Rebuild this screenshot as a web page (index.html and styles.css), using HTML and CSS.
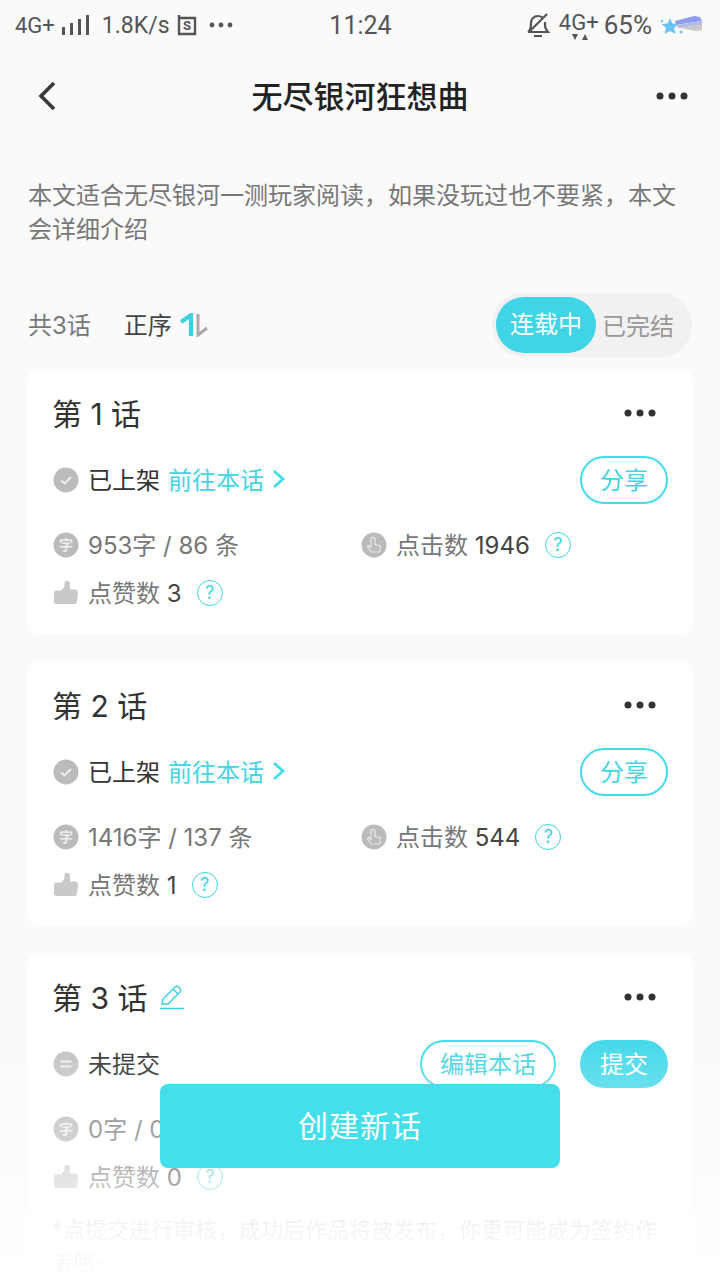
FILE: index.html
```html
<!DOCTYPE html>
<html lang="zh-CN">
<head>
    <meta charset="UTF-8">
    <meta name="viewport" content="width=device-width, initial-scale=1.0">
    <title>无尽银河狂想曲</title>
    <link rel="stylesheet" href="styles.css">
</head>
<body>
    <div class="page">
        <div class="status-bar">
            <div class="status-left">
                <span>4G+</span>
                <svg class="signal" width="28" height="20" viewBox="0 0 28 20"><path d="M0 12h3v8H0zM8 8h3v12H8zM16 4h3v16h-3zM24 0h3v20h-3z" fill="#555"/></svg>
                <span class="speed">1.8K/s</span>
                <svg width="20" height="22" viewBox="0 0 20 22"><path d="M2 1v19h16V4H2" fill="none" stroke="#555" stroke-width="2.4"/><text x="10" y="16" class="s-letter">S</text></svg>
                <svg class="status-dots" width="24" height="6" viewBox="0 0 24 6"><circle cx="3" cy="3" r="2.4" fill="#555"/><circle cx="12" cy="3" r="2.4" fill="#555"/><circle cx="21" cy="3" r="2.4" fill="#555"/></svg>
            </div>
            <div class="status-time">11:24</div>
            <div class="status-right">
                <svg width="24" height="26" viewBox="0 0 24 26"><path d="M2 20c3-2 3-5 3-9 0-4 3-7 7-7 2 0 3 .6 4.500 1.500M19 10v3c0 3 1 5 3 7H2M8 24h8M3 20L21 2" fill="none" stroke="#555" stroke-width="2.200"/></svg>
                <span class="net-type">4G+<svg class="net-arrows" width="16" height="8" viewBox="0 0 16 8"><path d="M0 1h6L3 7zM10 7h6l-3-6z" fill="#555"/></svg></span>
                <span class="battery">65%</span>
                <svg width="42" height="20" viewBox="0 0 42 20"><path d="M15 6L34 1l6 1 2 4-26 4z" fill="#8f9df0"/><path d="M17 10l25-4 0 4-24 3z" fill="#b5b8e0"/><path d="M19 13l23-3 0 5-6 1z" fill="#c9c9c9"/><path d="M10 3l2.500 5.500 6 .5-4.500 4 1.500 6-5.500-3-5.500 3 1.500-6-4.500-4 6-.5z" fill="#6cc3f0"/><circle cx="2" cy="6" r="1.200" fill="#6cc3f0"/><circle cx="21" cy="17" r="1.500" fill="#6cc3f0"/></svg>
            </div>
        </div>

        <header class="nav-bar">
            <svg width="18" height="30" viewBox="0 0 18 30"><path d="M16 2L3 15l13 13" fill="none" stroke="#3a3a3a" stroke-width="3.600"/></svg>
            <h1>无尽银河狂想曲</h1>
            <svg class="dots" width="32" height="8" viewBox="0 0 32 8"><circle cx="4" cy="4" r="3.500"/><circle cx="16" cy="4" r="3.500"/><circle cx="28" cy="4" r="3.500"/></svg>
        </header>

        <p class="intro">本文适合无尽银河一测玩家阅读，如果没玩过也不要紧，本文会详细介绍</p>

        <div class="list-bar">
            <span class="count">共3话</span>
            <span class="order">正序</span>
            <svg width="28" height="24" viewBox="0 0 28 24"><path d="M1 9L11 2v21" fill="none" stroke="#3fcfe0" stroke-width="4.200"/><path d="M18 1v21l9-7" fill="none" stroke="#aaa" stroke-width="3"/></svg>
            <div class="toggle">
                <span class="toggle-on">连载中</span>
                <span class="toggle-off">已完结</span>
            </div>
        </div>

        <section class="card">
            <div class="card-head">
                <h2>第 1 话</h2>
                <svg class="dots" width="32" height="8" viewBox="0 0 32 8"><circle cx="4" cy="4" r="3.500"/><circle cx="16" cy="4" r="3.500"/><circle cx="28" cy="4" r="3.500"/></svg>
            </div>
            <div class="state-row">
                <svg class="ico" width="26" height="26" viewBox="0 0 26 26"><circle cx="13" cy="13" r="12.500" fill="#bbb"/><path d="M8 13.500l3.500 3L18 10" fill="none" stroke="#eee" stroke-width="2"/></svg>
                <span class="state">已上架</span>
                <a class="go-link">前往本话<svg width="14" height="20" viewBox="0 0 14 20"><path d="M2 2l9 8-9 8" fill="none" stroke="#45dcea" stroke-width="2.800"/></svg></a>
                <button class="btn-line share">分享</button>
            </div>
            <div class="stats">
                <div class="stat stat-words">
                    <svg class="ico" width="26" height="26" viewBox="0 0 26 26"><circle cx="13" cy="13" r="12.500" fill="#bbb"/><text x="13" y="18" class="word-mark">字</text></svg>
                    <span>953字 / 86 条</span>
                </div>
                <div class="stat">
                    <svg class="ico" width="26" height="26" viewBox="0 0 26 26"><circle cx="13" cy="13" r="12.500" fill="#bbb"/><path d="M10 6.500v9l-2.500-2-1 1.500 4 5h8l1-6-5.500-1.500V6.500c-1.500-1.500-4-1.500-4 0z" fill="none" stroke="#e8e8e8" stroke-width="1.200"/></svg>
                    <span>点击数 <b>1946</b></span>
                    <span class="help">?</span>
                </div>
                <div class="stat">
                    <svg class="ico" width="26" height="26" viewBox="0 0 26 26"><path d="M1 13c0-1.500 1-2.500 2.500-2.500h5l3-4V3c0-3 5.500-3 5.500 1v5.500h5c2 0 3 1 3 3L24 22c-.3 1.500-1 2-2.500 2h-18C2 24 1 23 1 21.500z" fill="#c9c9c9"/></svg>
                    <span>点赞数 <b>3</b></span>
                    <span class="help">?</span>
                </div>
            </div>
        </section>

        <section class="card">
            <div class="card-head">
                <h2>第 2 话</h2>
                <svg class="dots" width="32" height="8" viewBox="0 0 32 8"><circle cx="4" cy="4" r="3.500"/><circle cx="16" cy="4" r="3.500"/><circle cx="28" cy="4" r="3.500"/></svg>
            </div>
            <div class="state-row">
                <svg class="ico" width="26" height="26" viewBox="0 0 26 26"><circle cx="13" cy="13" r="12.500" fill="#bbb"/><path d="M8 13.500l3.500 3L18 10" fill="none" stroke="#eee" stroke-width="2"/></svg>
                <span class="state">已上架</span>
                <a class="go-link">前往本话<svg width="14" height="20" viewBox="0 0 14 20"><path d="M2 2l9 8-9 8" fill="none" stroke="#45dcea" stroke-width="2.800"/></svg></a>
                <button class="btn-line share">分享</button>
            </div>
            <div class="stats">
                <div class="stat stat-words">
                    <svg class="ico" width="26" height="26" viewBox="0 0 26 26"><circle cx="13" cy="13" r="12.500" fill="#bbb"/><text x="13" y="18" class="word-mark">字</text></svg>
                    <span>1416字 / 137 条</span>
                </div>
                <div class="stat">
                    <svg class="ico" width="26" height="26" viewBox="0 0 26 26"><circle cx="13" cy="13" r="12.500" fill="#bbb"/><path d="M10 6.500v9l-2.500-2-1 1.500 4 5h8l1-6-5.500-1.500V6.500c-1.500-1.500-4-1.500-4 0z" fill="none" stroke="#e8e8e8" stroke-width="1.200"/></svg>
                    <span>点击数 <b>544</b></span>
                    <span class="help">?</span>
                </div>
                <div class="stat">
                    <svg class="ico" width="26" height="26" viewBox="0 0 26 26"><path d="M1 13c0-1.500 1-2.500 2.500-2.500h5l3-4V3c0-3 5.500-3 5.500 1v5.500h5c2 0 3 1 3 3L24 22c-.3 1.500-1 2-2.500 2h-18C2 24 1 23 1 21.500z" fill="#c9c9c9"/></svg>
                    <span>点赞数 <b>1</b></span>
                    <span class="help">?</span>
                </div>
            </div>
        </section>

        <section class="card">
            <div class="card-head">
                <h2>第 3 话</h2>
                <svg class="pencil" width="24" height="26" viewBox="0 0 24 26"><path d="M2 20l1-5L15 3c1-1 2.500-1 3.500 0l1.500 1.500c1 1 1 2.500 0 3.500L8 20zM13 5l5 5" fill="none" stroke="#3fcfe0" stroke-width="1.500"/><path d="M0 24.500h24" stroke="#3fcfe0" stroke-width="1.500"/></svg>
                <svg class="dots" width="32" height="8" viewBox="0 0 32 8"><circle cx="4" cy="4" r="3.500"/><circle cx="16" cy="4" r="3.500"/><circle cx="28" cy="4" r="3.500"/></svg>
            </div>
            <div class="state-row">
                <svg class="ico" width="26" height="26" viewBox="0 0 26 26"><circle cx="13" cy="13" r="12.500" fill="#c4c4c4"/><path d="M7.500 10.500h11M7.500 15.500h11" stroke="#eee" stroke-width="2"/></svg>
                <span class="state">未提交</span>
                <button class="btn-line edit">编辑本话</button>
                <button class="btn-fill">提交</button>
            </div>
            <div class="stats">
                <div class="stat stat-words">
                    <svg class="ico" width="26" height="26" viewBox="0 0 26 26"><circle cx="13" cy="13" r="12.500" fill="#bbb"/><text x="13" y="18" class="word-mark">字</text></svg>
                    <span>0字 / 0 条</span>
                </div>
                <div class="stat">
                    <svg class="ico" width="26" height="26" viewBox="0 0 26 26"><path d="M1 13c0-1.500 1-2.500 2.500-2.500h5l3-4V3c0-3 5.500-3 5.500 1v5.500h5c2 0 3 1 3 3L24 22c-.3 1.500-1 2-2.500 2h-18C2 24 1 23 1 21.500z" fill="#c9c9c9"/></svg>
                    <span>点赞数 <b>0</b></span>
                    <span class="help">?</span>
                </div>
            </div>
            <p class="note">*点提交进行审核，成功后作品将被发布，你更可能成为签约作者哦~</p>
        </section>

        <div class="fade"></div>
        <button class="create-btn">创建新话</button>
    </div>
</body>
</html>
```

FILE: styles.css
```css
* {
    margin: 0;
    padding: 0;
    box-sizing: border-box;
    font-family: Inter, 'Noto Sans CJK SC', sans-serif;
}

body {
    background-color: #fafafa;
    color: #333;
}

.page {
    position: relative;
    width: 720px;
    height: 1280px;
    padding: 0 28px;
    overflow: hidden;
}

.status-bar {
    display: flex;
    align-items: center;
    justify-content: space-between;
    height: 50px;
    margin: 0 -10px 0 -13px;
    color: #555;
    font-size: 22px;
}

.status-bar span, .status-time, .s-letter {
    font-family: Roboto, sans-serif;
}

.status-left, .status-right {
    display: flex;
    align-items: center;
    gap: 7px;
    width: 270px;
}

.speed {
    margin-left: 5px;
    font-size: 23px;
}

.status-dots {
    margin-left: 5px;
}

.status-right {
    justify-content: flex-end;
    gap: 7px;
}

.s-letter {
    font-size: 13px;
    font-weight: 700;
    text-anchor: middle;
    fill: #555;
}

.status-time {
    margin-left: 4px;
    font-size: 25px;
}

.net-type {
    position: relative;
    margin: -6px -2px 0 2px;
}

.net-arrows {
    position: absolute;
    left: 13px;
    bottom: -6px;
}

.battery {
    font-size: 26px;
    margin-right: 1px;
}

.nav-bar {
    display: grid;
    grid-template-columns: 1fr auto 1fr;
    align-items: center;
    height: 92px;
    padding: 0 4px 0 10px;
    margin-right: 6px;
}

.nav-bar h1 {
    margin-top: -4px;
    font-size: 31px;
    font-weight: 500;
    color: #222;
}

.nav-bar .dots {
    justify-self: end;
    margin-right: -6px;
}

.dots {
    fill: #333;
}

.intro {
    margin-top: 37px;
    color: #777;
    font-size: 24px;
    line-height: 34px;
}

.list-bar {
    display: flex;
    align-items: center;
    margin-top: 46px;
    height: 64px;
}

.count {
    margin-top: -4px;
    color: #777;
    font-size: 24px;
}

.order {
    margin: -4px 8px 0 33px;
    color: #444;
    font-size: 24px;
}

.toggle {
    display: flex;
    align-items: center;
    margin-left: auto;
    width: 200px;
    height: 64px;
    padding: 4px;
    border-radius: 32px;
    background-color: #f1f1f1;
}

.toggle-on {
    width: 100px;
    height: 56px;
    border-radius: 28px;
    background-color: #3fd4e6;
    color: #fff;
    font-size: 24px;
    line-height: 56px;
    text-align: center;
}

.toggle-off {
    margin-left: 6px;
    color: #999;
    font-size: 24px;
    margin-top: -2px;
}

.card {
    margin-top: 12px;
    height: 265px;
    padding: 0 24px;
    border-radius: 10px;
    background-color: #fff;
}

.card + .card {
    margin-top: 27px;
}

.card:last-of-type {
    height: 400px;
}

.card-head {
    display: flex;
    align-items: center;
    height: 87px;
}

.card-head h2 {
    margin-top: -2px;
    font-size: 30px;
    font-weight: 400;
    color: #333;
}

.card-head .dots {
    margin-left: auto;
    margin-right: 12px;
}

.pencil {
    margin-left: 13px;
}

.state-row {
    display: flex;
    align-items: center;
    height: 48px;
}

.ico {
    flex-shrink: 0;
    margin-left: 1px;
}

.state {
    margin: -3px 0 0 9px;
    color: #333;
    font-size: 24px;
}

.go-link {
    display: flex;
    align-items: center;
    gap: 8px;
    margin: -3px 0 0 8px;
    color: #45d4e4;
    font-size: 24px;
}

.btn-line, .btn-fill {
    height: 48px;
    padding-bottom: 4px;
    border-radius: 24px;
    font-size: 24px;
    cursor: pointer;
}

.btn-line {
    border: 2px solid #45dcea;
    background-color: #fff;
    color: #45d4e4;
}

.share {
    margin-left: auto;
    width: 88px;
}

.edit {
    margin-left: auto;
    width: 136px;
}

.btn-fill {
    margin-left: 24px;
    width: 88px;
    border: none;
    background-color: #45d9ea;
    color: #fff;
}

.stats {
    display: flex;
    flex-wrap: wrap;
    margin-top: 17px;
}

.stat {
    display: flex;
    align-items: center;
    gap: 9px;
    height: 48px;
    color: #777;
    font-size: 24px;
}

.stat > span {
    margin-top: -3px;
}

.stat-words {
    width: 308px;
}

.stat b {
    color: #444;
    font-weight: 400;
}

.stat + .stat:last-child {
    width: 100%;
}

.word-mark {
    font-size: 14px;
    font-weight: 700;
    text-anchor: middle;
    fill: #eee;
}

.stat > .help {
    width: 26px;
    height: 26px;
    margin: 0 0 0 6px;
    border: 1.500px solid #3fd4e0;
    border-radius: 50%;
    color: #3fd4e0;
    font-size: 18px;
    line-height: 23px;
    text-align: center;
}

.note {
    margin-top: 13px;
    color: #bbb;
    font-size: 22px;
    line-height: 32px;
}

.fade {
    position: absolute;
    left: 0;
    right: 0;
    top: 1040px;
    bottom: 0;
    background: linear-gradient(rgba(255,255,255,0), rgba(255,255,255,0.2) 21%, rgba(255,255,255,0.3) 37%, rgba(255,255,255,0.5) 58%, rgba(255,255,255,0.85) 79%, rgba(255,255,255,0.95));
}

.create-btn {
    position: absolute;
    left: 160px;
    top: 1084px;
    width: 400px;
    height: 84px;
    padding-bottom: 4px;
    border: none;
    border-radius: 8px;
    background-color: #45dfec;
    color: #fff;
    font-size: 30px;
    letter-spacing: 1px;
    cursor: pointer;
}
```
